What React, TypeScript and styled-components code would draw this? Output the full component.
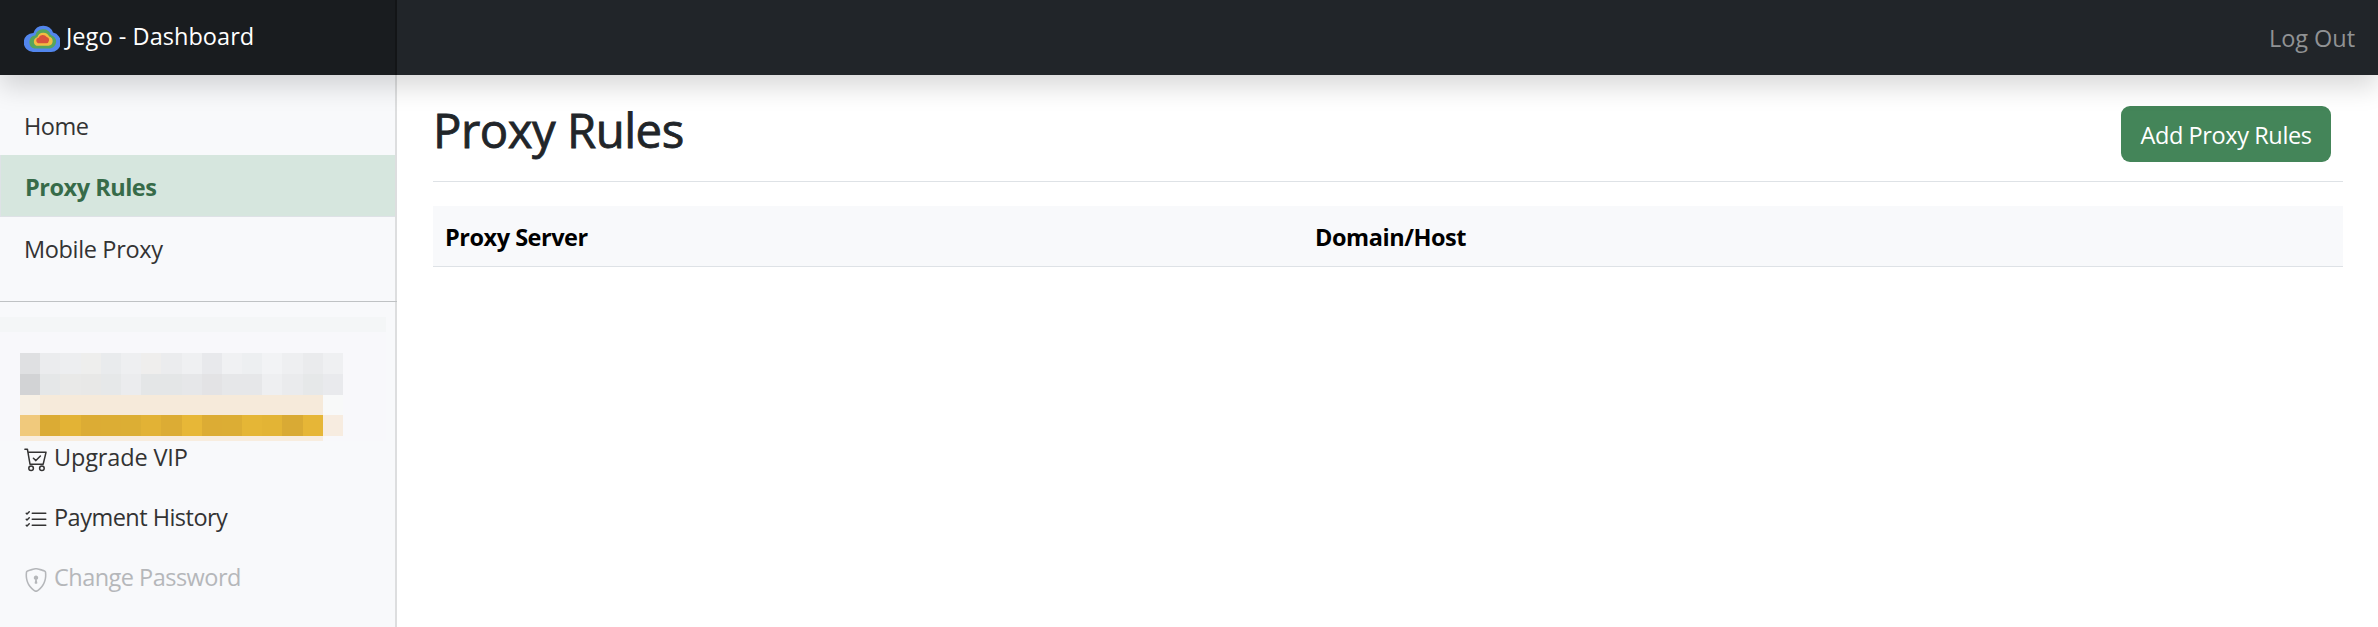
import React from 'react';
import styled, { createGlobalStyle, css } from 'styled-components';
import { BsListCheck, BsShieldLock } from 'react-icons/bs';

const GlobalStyle = createGlobalStyle`
  *, *::before, *::after { box-sizing: border-box; }
  html, body { margin: 0; background: #fff; }
  body {
    font-family: 'Segoe UI', 'Open Sans', 'Noto Sans', sans-serif;
    font-size: 23.5px;
    line-height: 36px;
    color: #212529;
    overflow: hidden;
  }
`;

const Page = styled.div`
  display: flex;
  flex-direction: column;
  height: 627px;
`;

/* Letter spacing differs by label so that each keeps its measured width. */
const Label = styled.span<{ $ls?: number }>`
  white-space: nowrap;
  letter-spacing: ${p => p.$ls ?? 0}px;
`;

const Header = styled.header`
  position: relative;
  z-index: 2;
  display: flex;
  flex: none;
  justify-content: space-between;
  height: 75px;
  background: #212529;
  box-shadow: 0 12px 24px rgba(0, 0, 0, 0.15);
`;

const Brand = styled.a`
  display: flex;
  align-items: flex-start;
  gap: 6px;
  width: 397px;
  padding: 18px 0 0 24px;
  background: #191c1f;
  border-right: 2px solid #131517;
  color: #fff;
`;

const Logo = styled.svg`
  width: 36px;
  height: 27px;
  margin-top: 7px;
`;

const SignOut = styled.a`
  padding: 20px 23px 0 0;
  color: #909294;
`;

const Body = styled.div`
  display: flex;
  flex: 1;
`;

const Sidebar = styled.nav`
  width: 397px;
  flex: none;
  padding-top: 19px;
  background: #f8f9fb;
  border-right: 2px solid #dddedf;
`;

const linkTone = {
  normal: css`color: #333333;`,
  active: css`
    color: #376b49;
    font-weight: 700;
    background: #d6e6de;
    border-left: 1px solid #dee2e6;
    border-bottom: 1px solid #dee2e6;
  `,
  disabled: css`color: #b5b7ba;`,
};

const NavLink = styled.a<{ $tone?: keyof typeof linkTone; $h: number; $drop?: number }>`
  display: flex;
  align-items: center;
  gap: 6px;
  height: ${p => p.$h}px;
  padding: ${p => p.$drop ?? 0}px 0 0 24px;
  ${p => linkTone[p.$tone ?? 'normal']}
  & > svg { flex: none; margin-top: 5px; }
`;

const Divider = styled.div`
  height: 1px;
  margin: 22px -2px 0 0;
  background: #bfc2c4;
`;

const Account = styled.div`
  width: 386px;
  height: 124px;
  margin-top: 15px;
  background: #f8f8fb;
  border-top: 15px solid #f4f6f7;
  padding: 21px 0 0 20px;
`;

const MosaicRow = styled.div<{ $h: number }>`
  display: grid;
  grid-template-columns: repeat(16, 20.2px);
  height: ${p => p.$h}px;
`;

const Tile = styled.i<{ $c: string }>`
  background: ${p => p.$c};
`;

const Main = styled.main`
  flex: 1;
  padding: 0 35px 0 36px;
`;

const TitleBar = styled.div`
  display: flex;
  justify-content: space-between;
  align-items: flex-start;
  height: 107px;
  border-bottom: 1px solid #dee2e6;
  padding: 31px 12px 0 0;
`;

const Title = styled.h1`
  margin: -5px 0 0;
  font-size: 47.3px;
  line-height: 58px;
  font-weight: 500;
  -webkit-text-stroke: 0.8px currentColor;
`;

const Button = styled.button`
  display: flex;
  justify-content: center;
  align-items: center;
  width: 210px;
  height: 56px;
  padding: 2px 0 0;
  border: 0;
  border-radius: 9px;
  background: #448559;
  color: #fff;
  font: inherit;
`;

const Table = styled.table`
  width: 100%;
  margin-top: 24px;
  border-collapse: separate;
  border-spacing: 0;
  table-layout: fixed;
`;

const Th = styled.th<{ $w?: number }>`
  width: ${p => (p.$w ? `${p.$w}px` : 'auto')};
  height: 61px;
  padding: 1px 0 0 12px;
  text-align: left;
  font-weight: 700;
  color: #000;
  background: #f8f9fb;
  border-bottom: 1px solid #dee2e6;
`;

const CloudLogo = () => (
  <Logo viewBox="0 0 36 27">
    <path d="M9 27A9 9 0 0 1 9.5 8 10.3 10.3 0 0 1 29 7.6 9.8 9.8 0 0 1 27 27Z" fill="#5286ed" />
    <path d="M10.5 23.5a6.6 6.6 0 0 1 .8-13 8 8 0 0 1 15.4-.6 6.9 6.9 0 0 1-.7 13.6Z" fill="#57a55c" />
    <path d="M12.5 20.8a4.6 4.6 0 0 1 .8-8.6 6.3 6.3 0 0 1 11.9-.6 4.7 4.7 0 0 1-.7 9.2Z" fill="#f3bc42" />
    <path d="M14 18.2a2.9 2.9 0 0 1 .5-5.5 4.7 4.7 0 0 1 8.2-.6 3.1 3.1 0 0 1-.6 6.1Z" fill="#d8523c" />
  </Logo>
);

const CartIcon = () => (
  <svg width="24" height="24" viewBox="0 0 24 24" fill="none" stroke="currentColor" strokeWidth="1.5" strokeLinecap="round" strokeLinejoin="round">
    <path d="M.9 1.2h2.5L6 16.2h13.2L22 4.3H3.9M9.4 10.2l2.5 2.4 4.5-4.6" />
    <circle cx="7.1" cy="20.3" r="2.3" />
    <circle cx="17.9" cy="20.3" r="2.3" />
  </svg>
);

const mosaic: { h: number; tiles: string[] }[] = [
  { h: 20.5, tiles: ['#dfe0e2', '#ebecee', '#edeef0', '#eeeeed', '#e9ebed', '#eeeff1', '#efeeed', '#ebecee', '#eff0f2', '#e8e9ec', '#f0f1f3', '#edeff1', '#f2f3f5', '#eeeff1', '#eaebed', '#eff0f2'] },
  { h: 21, tiles: ['#d2d3d5', '#e5e7e8', '#e9e9e8', '#e8e8e7', '#e6e8e9', '#ebecee', '#e4e6e7', '#e4e6e7', '#e6e7e9', '#e3e3e5', '#e6e7e9', '#e6e7e9', '#eeeff1', '#eaebed', '#e6e8e9', '#e9eaed'] },
  { h: 20.5, tiles: ['#f7f0e5', ...Array(14).fill('#f6eada'), '#f8f9f9'] },
  { h: 21, tiles: ['#f0c97c', '#dbab34', '#e3b335', '#dcac34', '#dcad34', '#dcae34', '#e2b235', '#dcac34', '#e7b737', '#dcac34', '#dcad34', '#e5b636', '#e3b435', '#d9aa34', '#e6b637', '#f7ece0'] },
  { h: 5, tiles: [...Array(15).fill('#f8eddf'), '#f8f8fb'] },
];

export default function App() {
  return (
    <Page>
      <GlobalStyle />
      <Header>
        <Brand>
          <CloudLogo />
          <Label $ls={0.05}>Jego - Dashboard</Label>
        </Brand>
        <SignOut><Label $ls={-0.05}>Log Out</Label></SignOut>
      </Header>
      <Body>
        <Sidebar>
          <NavLink $h={61} $drop={3}><Label $ls={-0.5}>Home</Label></NavLink>
          <NavLink $h={62} $drop={2} $tone="active"><Label $ls={-0.48}>Proxy Rules</Label></NavLink>
          <NavLink $h={62} $drop={1}><Label $ls={-0.35}>Mobile Proxy</Label></NavLink>
          <Divider />
          <Account>
            {mosaic.map((row, y) => (
              <MosaicRow key={y} $h={row.h}>
                {row.tiles.map((c, x) => <Tile key={x} $c={c} />)}
              </MosaicRow>
            ))}
          </Account>
          <NavLink $h={32}><CartIcon /><Label $ls={-0.15}>Upgrade VIP</Label></NavLink>
          <NavLink $h={88}><BsListCheck size={24} /><Label $ls={-0.52}>Payment History</Label></NavLink>
          <NavLink $h={32} $tone="disabled"><BsShieldLock size={24} /><Label $ls={-0.52}>Change Password</Label></NavLink>
        </Sidebar>
        <Main>
          <TitleBar>
            <Title><Label $ls={-0.5}>Proxy Rules</Label></Title>
            <Button type="button"><Label $ls={-0.4}>Add Proxy Rules</Label></Button>
          </TitleBar>
          <Table>
            <thead>
              <tr>
                <Th $w={870}><Label $ls={-0.48}>Proxy Server</Label></Th>
                <Th><Label $ls={-0.45}>Domain/Host</Label></Th>
              </tr>
            </thead>
          </Table>
        </Main>
      </Body>
    </Page>
  );
}
